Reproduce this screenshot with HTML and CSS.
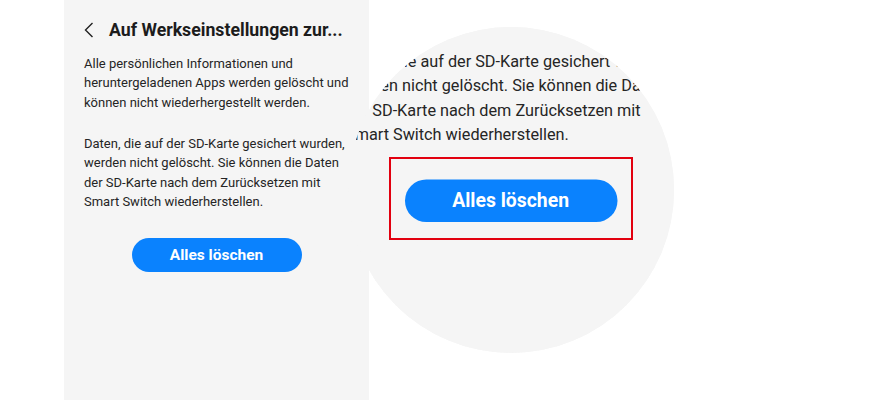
FILE: index.html
```html
<!DOCTYPE html>
<html lang="de">
<head>
<meta charset="utf-8">
<title>Auf Werkseinstellungen zurücksetzen</title>
<link rel="stylesheet" href="styles.css">
</head>
<body>
<div class="stage">
  <div class="phone">
    <div class="header">
      <svg class="back" width="10" height="16" viewBox="0 0 10 16"><path d="M8.5 1 L1.5 8 L8.5 15" fill="none" stroke="#222" stroke-width="1.4"/></svg>
      <span class="title">Auf Werkseinstellungen zur...</span>
    </div>
    <p class="para p1">Alle persönlichen Informationen und heruntergeladenen Apps werden gelöscht und können nicht wiederhergestellt werden.</p>
    <p class="para p2">Daten, die auf der SD-Karte gesichert wurden, werden nicht gelöscht. Sie können die Daten der SD-Karte nach dem Zurücksetzen mit Smart Switch wiederherstellen.</p>
    <div class="btn-row"><span class="btn">Alles löschen</span></div>
  </div>

  <div class="lens">
    <div class="phone mag">
      <div class="header">
        <svg class="back" width="10" height="16" viewBox="0 0 10 16"><path d="M8.5 1 L1.5 8 L8.5 15" fill="none" stroke="#222" stroke-width="1.4"/></svg>
        <span class="title">Auf Werkseinstellungen zur...</span>
      </div>
      <p class="para p1">Alle persönlichen Informationen und heruntergeladenen Apps werden gelöscht und können nicht wiederhergestellt werden.</p>
      <p class="para p2">Daten, die auf der SD-Karte gesichert wurden, werden nicht gelöscht. Sie können die Daten der SD-Karte nach dem Zurücksetzen mit Smart Switch wiederherstellen.</p>
      <div class="btn-row"><span class="btn">Alles löschen</span></div>
    </div>
  </div>

  <div class="highlight"></div>
</div>
</body>
</html>
```
FILE: styles.css
```css
html, body {
  margin: 0;
  padding: 0;
  background: #ffffff;
}
body {
  font-family: Roboto, "Noto Sans", "Liberation Sans", sans-serif;
  color: #222222;
}
.stage {
  position: relative;
  width: 879px;
  height: 400px;
  overflow: hidden;
}
.phone {
  margin-left: 64px;
  width: 305px;
  height: 400px;
  box-sizing: border-box;
  padding: 14px 20px 0 20px;
  background: #f5f5f5;
}
.header {
  display: flex;
  align-items: center;
  height: 32px;
}
.back {
  display: block;
  margin-left: 0;
  margin-right: 15px;
}
.title {
  font-size: 17.7px;
  font-weight: 700;
  color: #1c1c1c;
  white-space: nowrap;
}
.para {
  margin: 0;
  font-size: 13px;
  line-height: 19.5px;
  color: #252525;
}
.p1 {
  margin-top: 7.5px;
}
.p2 {
  margin-top: 21.5px;
}
.btn-row {
  display: flex;
  justify-content: center;
  margin-top: 26px;
}
.btn {
  display: flex;
  align-items: center;
  justify-content: center;
  width: 170px;
  height: 34px;
  border-radius: 17px;
  background: #0a82fe;
  color: #ffffff;
  font-size: 15.5px;
  font-weight: 700;
}
.lens {
  position: absolute;
  left: 348px;
  top: 27px;
  width: 326px;
  height: 326px;
  border-radius: 50%;
  overflow: hidden;
  background: #f5f5f5;
}
.mag {
  position: absolute;
  left: -28px;
  top: -145px;
  margin-left: 0;
  transform: scale(1.25);
  transform-origin: 0 0;
}
.highlight {
  position: absolute;
  left: 389px;
  top: 157px;
  width: 244px;
  height: 83px;
  box-sizing: border-box;
  border: 2px solid #e2000f;
}
```
